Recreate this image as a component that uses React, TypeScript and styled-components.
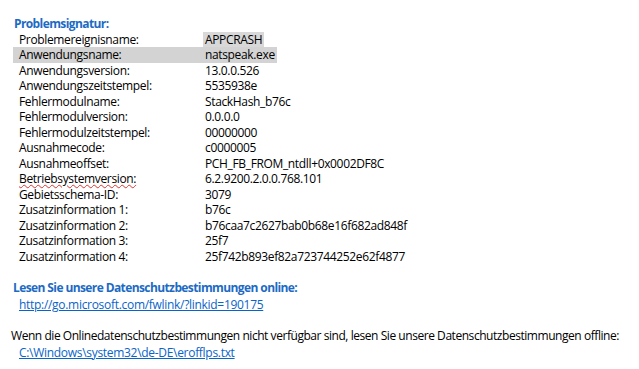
import React from "react"
import styled, { createGlobalStyle } from "styled-components"

const GlobalStyle = createGlobalStyle`
  html, body {
    margin: 0;
    padding: 0;
    background: #ffffff;
  }
  body {
    font-family: "Open Sans", "Noto Sans", sans-serif;
    font-size: 12px;
    letter-spacing: -0.35px;
    color: #000000;
  }
`

interface Entry {
  label: string
  value: string
  misspelled?: boolean
}

const entries: Entry[] = [
  { label: "Problemereignisname:", value: "APPCRASH" },
  { label: "Anwendungsname:", value: "natspeak.exe" },
  { label: "Anwendungsversion:", value: "13.0.0.526" },
  { label: "Anwendungszeitstempel:", value: "5535938e" },
  { label: "Fehlermodulname:", value: "StackHash_b76c" },
  { label: "Fehlermodulversion:", value: "0.0.0.0" },
  { label: "Fehlermodulzeitstempel:", value: "00000000" },
  { label: "Ausnahmecode:", value: "c0000005" },
  { label: "Ausnahmeoffset:", value: "PCH_FB_FROM_ntdll+0x0002DF8C" },
  { label: "Betriebsystemversion:", value: "6.2.9200.2.0.0.768.101", misspelled: true },
  { label: "Gebietsschema-ID:", value: "3079" },
  { label: "Zusatzinformation 1:", value: "b76c" },
  { label: "Zusatzinformation 2:", value: "b76caa7c2627bab0b68e16f682ad848f" },
  { label: "Zusatzinformation 3:", value: "25f7" },
  { label: "Zusatzinformation 4:", value: "25f742b893ef82a723744252e62f4877" },
]

const App = () => {
  return (
    <>
      <GlobalStyle />
      <Page>
        <Heading indent={14}>Problemsignatur:</Heading>
        <Table>
          {entries.map((entry, i) => (
            <Row key={entry.label} selected={i === 1}>
              <Label misspelled={entry.misspelled}>{entry.label}</Label>
              {i === 0 ? (
                <Marked>{entry.value}</Marked>
              ) : (
                <Value>{entry.value}</Value>
              )}
            </Row>
          ))}
        </Table>

        <Section>
          <Heading indent={13}>Lesen Sie unsere Datenschutzbestimmungen online:</Heading>
          <Link href="#">http://go.microsoft.com/fwlink/?linkid=190175</Link>
        </Section>

        <Section>
          <Note>
            Wenn die Onlinedatenschutzbestimmungen nicht verfügbar sind, lesen Sie unsere
            Datenschutzbestimmungen offline:
          </Note>
          <Link href="#">C:\Windows\system32\de-DE\erofflps.txt</Link>
        </Section>
      </Page>
    </>
  )
}

export default App

const Page = styled.div`
  width: 639px;
  height: 369px;
  padding-top: 16px;
  box-sizing: border-box;
  display: flex;
  flex-direction: column;
  overflow: hidden;
`

interface HeadingProps {
  indent: number
}
const Heading = styled.div<HeadingProps>`
  padding-left: ${props => props.indent}px;
  font-weight: bold;
  color: #1c6ac4;
  line-height: 15.5px;
  letter-spacing: -0.6px;
`

const Table = styled.div`
  display: flex;
  flex-direction: column;
  padding-left: 13px;
`

interface RowProps {
  selected?: boolean
}
const Row = styled.div<RowProps>`
  display: flex;
  width: fit-content;
  padding: 0 2px 0 6px;
  line-height: 15.5px;
  background-color: ${props => (props.selected ? "#d3d3d3" : "transparent")};
`

interface LabelProps {
  misspelled?: boolean
}
const Label = styled.div<LabelProps>`
  width: 186px;
  flex-shrink: 0;
  text-decoration: ${props => (props.misspelled ? "underline wavy #e03030" : "none")};
  text-decoration-thickness: 1px;
  text-underline-offset: 1px;
`

const Value = styled.div`
  white-space: nowrap;
`

const Marked = styled(Value)`
  margin-left: -2px;
  padding: 0 2px;
  background-color: #d8d8d8;
`

const Section = styled.div`
  display: flex;
  flex-direction: column;
  margin-top: 15.5px;
  line-height: 15.5px;
`

const Link = styled.a`
  align-self: flex-start;
  margin-left: 19px;
  margin-top: 1.5px;
  color: #0a64c8;
  text-decoration: underline;
  letter-spacing: -0.3px;
`

const Note = styled.div`
  padding-left: 11px;
  white-space: nowrap;
  letter-spacing: -0.45px;
`
